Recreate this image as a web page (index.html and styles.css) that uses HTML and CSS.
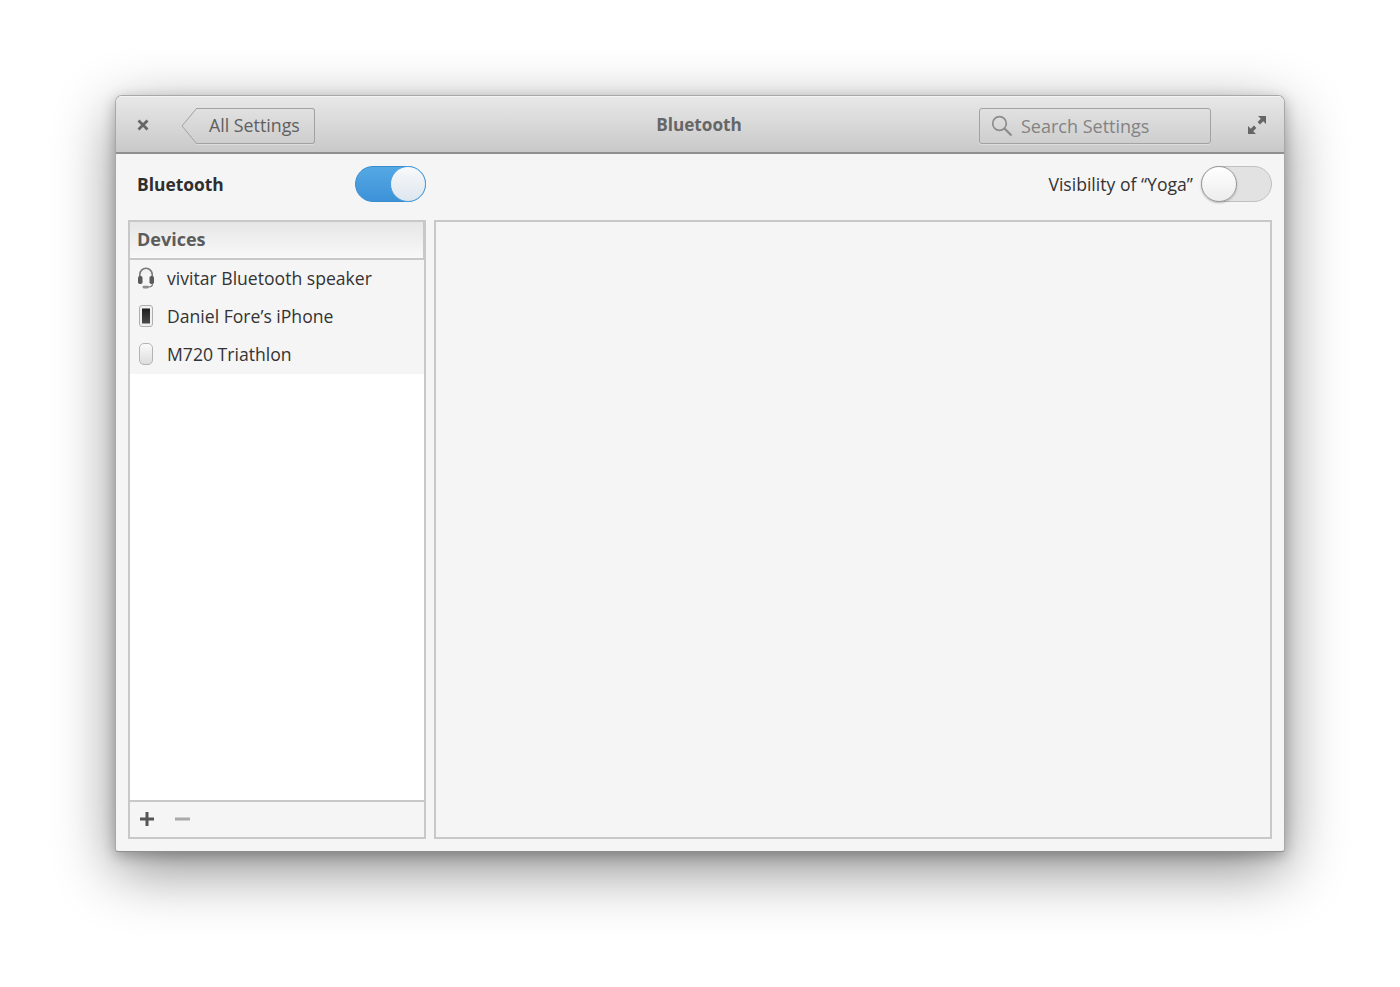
FILE: index.html
```html
<!DOCTYPE html>
<html lang="en">
<head>
<meta charset="utf-8">
<title>Bluetooth</title>
<link rel="stylesheet" href="styles.css">
</head>
<body>
<div class="window">
  <header class="titlebar">
    <div class="tb-left">
      <svg class="close" width="14" height="14" viewBox="0 0 14 14"><path d="M2.500 2.500l9 9M11.500 2.500l-9 9" stroke="#666" stroke-width="2.800" fill="none"/></svg>
      <div class="back">
        <svg class="back-arrow" width="16" height="36" viewBox="0 0 16 36"><path d="M15.500 .5L1 18l14.500 17.500" fill="none" stroke="#a2a2a2" stroke-width="1"/></svg>
        <span class="back-label">All Settings</span>
      </div>
    </div>
    <div class="title">Bluetooth</div>
    <div class="search">
      <svg width="24" height="24" viewBox="0 0 24 24"><circle cx="9.500" cy="9.500" r="6.800" fill="none" stroke="#8c8c8c" stroke-width="1.700"/><path d="M14.500 14.500l7 7" stroke="#8c8c8c" stroke-width="2.200"/></svg>
      <span class="search-text">Search Settings</span>
    </div>
    <svg class="maximize" width="20" height="20" viewBox="0 0 20 20"><path d="M11 1h8v8l-2.800-2.800-3.200 3.200-2.400-2.400 3.200-3.200zM1 19v-8l2.800 2.800 3.200-3.200 2.400 2.400-3.200 3.200L9 19z" fill="#666"/></svg>
  </header>
  <div class="content">
    <div class="controls">
      <div class="controls-left">
        <strong class="bt-label">Bluetooth</strong>
        <div class="switch on"><span class="knob"></span></div>
      </div>
      <div class="controls-right">
        <span class="vis-label">Visibility of “Yoga”</span>
        <div class="switch off"><span class="knob"></span></div>
      </div>
    </div>
    <div class="panes">
      <aside class="sidebar">
        <div class="side-head">Devices</div>
        <ul class="devices">
          <li class="device">
            <svg class="dev-icon" width="20" height="24" viewBox="0 0 20 24"><path d="M3.800 11V8.500a6.200 6.200 0 0 1 12.400 0V11" fill="#f2f2f2" stroke="#777" stroke-width="1.600"/><rect x="5.500" y="8" width="9" height="8" fill="#f5f5f5"/><rect x="2" y="10" width="4.500" height="8" rx="1.800" fill="#5a5a5a"/><rect x="13.500" y="10" width="4.500" height="8" rx="1.800" fill="#5a5a5a"/><path d="M16.500 18c0 2.500-2 3-4 3" fill="none" stroke="#777" stroke-width="1.200"/><rect x="6.500" y="19.800" width="6.500" height="2.600" rx="1.300" fill="#8d8d8d"/></svg>
            <span>vivitar Bluetooth speaker</span>
          </li>
          <li class="device">
            <svg class="dev-icon" width="20" height="24" viewBox="0 0 20 24"><defs><linearGradient id="screen" x1="0" y1="0" x2="0" y2="1"><stop offset="0" stop-color="#1e1e1e"/><stop offset="1" stop-color="#4a4a4a"/></linearGradient></defs><rect x="3.500" y="1.500" width="13" height="21" rx="2.500" fill="#f0f0f0" stroke="#aeaeae"/><rect x="6" y="4.500" width="8" height="15" fill="url(#screen)"/></svg>
            <span>Daniel Fore’s iPhone</span>
          </li>
          <li class="device">
            <svg class="dev-icon" width="20" height="24" viewBox="0 0 20 24"><defs><linearGradient id="mouse" x1="0" y1="0" x2="0" y2="1"><stop offset="0" stop-color="#fbfbfb"/><stop offset="1" stop-color="#dcdcdc"/></linearGradient></defs><rect x="3.500" y="1.500" width="13" height="21" rx="4.500" fill="url(#mouse)" stroke="#b4b4b4"/></svg>
            <span>M720 Triathlon</span>
          </li>
        </ul>
        <div class="side-fill"></div>
        <div class="side-foot">
          <svg width="16" height="16" viewBox="0 0 16 16"><path d="M8 1v14M1 8h14" stroke="#555" stroke-width="3"/></svg>
          <svg width="16" height="16" viewBox="0 0 16 16"><path d="M1 8h15" stroke="#aaa" stroke-width="3"/></svg>
        </div>
      </aside>
      <main class="detail"></main>
    </div>
  </div>
</div>
</body>
</html>
```
FILE: styles.css
```css
* { box-sizing: border-box; }
html, body { margin: 0; height: 100%; }
body {
  background: #fff;
  font-family: "Open Sans", "Liberation Sans", sans-serif;
  font-size: 17.600px;
  color: #333;
  padding: 95px 115px 0 115px;
  overflow: hidden;
}
.window {
  width: 1170px;
  height: 757px;
  border: 1px solid #a8a8a8;
  border-bottom-color: #8e8e8e;
  border-radius: 7px 7px 3px 3px;
  background: #f5f5f5;
  box-shadow: 0 18px 60px rgba(0,0,0,.45), 0 4px 14px rgba(0,0,0,.25);
  display: flex;
  flex-direction: column;
  overflow: hidden;
}
.titlebar {
  height: 58px;
  flex: none;
  display: flex;
  align-items: center;
  position: relative;
  padding: 2px 17px 0 20px;
  background: linear-gradient(#e8e8e8, #c9c9c9);
  border-bottom: 2px solid #8f8f8f;
  box-shadow: inset 0 1px 0 #f4f4f4;
}
.tb-left { display: flex; align-items: center; }
.close { margin-right: 31px; }
.back { display: flex; align-items: stretch; height: 36px; margin-top: 2px; }
.back-arrow { display: block; margin-right: -1px; }
.back-label {
  display: flex;
  align-items: center;
  width: 119px;
  padding: 0 0 2px 13px;
  border: 1px solid #a2a2a2;
  border-left: 0;
  border-radius: 0 3px 3px 0;
  color: #5f5f5f;
  font-size: 17.800px;
  box-shadow: 0 1px 0 rgba(255,255,255,.3);
}
.title {
  position: absolute;
  left: 0;
  right: 2px;
  margin-top: -2px;
  text-align: center;
  font-weight: 700;
  font-size: 17.200px;
  color: #666;
  pointer-events: none;
}
.search {
  margin: 2px 0 0 auto;
  width: 232px;
  height: 36px;
  display: flex;
  align-items: center;
  gap: 7px;
  padding-left: 10px;
  border: 1px solid #a2a2a2;
  border-radius: 3px;
  color: #838383;
  font-size: 18px;
  box-shadow: 0 1px 0 rgba(255,255,255,.3);
}
.maximize { margin-left: 36px; }
.content {
  flex: 1;
  display: flex;
  flex-direction: column;
  padding: 0 12px 12px 12px;
  min-height: 0;
}
.controls {
  height: 66px;
  flex: none;
  display: flex;
  align-items: center;
  justify-content: space-between;
  padding-bottom: 6px;
}
.controls-left { display: flex; align-items: center; width: 298px; padding-left: 9px; justify-content: space-between; }
.controls-right { display: flex; align-items: center; gap: 8px; }
.bt-label { font-weight: 700; color: #2e2e2e; font-size: 17.400px; padding-bottom: 1px; }
.vis-label { color: #333; padding-bottom: 1px; }
.switch {
  width: 71px;
  height: 36px;
  border-radius: 18px;
  display: flex;
  align-items: center;
  position: relative;
}
.switch.on {
  background: linear-gradient(#54a8e4, #3d92d8);
  border: 1px solid #3a8ccc;
  justify-content: flex-end;
}
.switch.off {
  background: #e2e2e2;
  border: 1px solid #c0c0c0;
  justify-content: flex-start;
}
.knob {
  width: 36px;
  height: 36px;
  flex: none;
  border-radius: 50%;
  margin: -1px;
}
.on .knob {
  background: linear-gradient(#f8f9fa, #dde6ee);
  border: 1px solid #4f9edb;
}
.off .knob {
  background: linear-gradient(#ffffff, #ececec);
  border: 1px solid #999;
  box-shadow: 0 1px 2px rgba(0,0,0,.25);
}
.panes { flex: 1; display: flex; gap: 8px; min-height: 0; }
.sidebar {
  width: 298px;
  flex: none;
  display: flex;
  flex-direction: column;
  border: 2px solid #c8c8c8;
  background: #fff;
}
.side-head {
  height: 38px;
  flex: none;
  display: flex;
  align-items: center;
  padding: 0 0 2px 7px;
  font-size: 18px;
  font-weight: 700;
  color: #5c5c5c;
  background: linear-gradient(#e6e6e6, #f8f8f8);
  border-bottom: 2px solid #c8c8c8;
  border-right: 2px solid #c8c8c8;
  margin-right: -1px;
}
.devices { list-style: none; margin: 0; padding: 0; background: #f5f5f5; flex: none; }
.device {
  height: 38px;
  display: flex;
  align-items: center;
  gap: 11px;
  padding: 0 0 2px 6px;
  color: #333;
}
.dev-icon { flex: none; }
.side-fill { flex: 1; background: #fff; }
.side-foot {
  height: 37px;
  flex: none;
  display: flex;
  align-items: center;
  gap: 19px;
  padding: 0 0 1px 9px;
  background: #f5f5f5;
  border-top: 2px solid #c8c8c8;
}
.detail { flex: 1; border: 2px solid #c8c8c8; background: #f5f5f5; }
```
